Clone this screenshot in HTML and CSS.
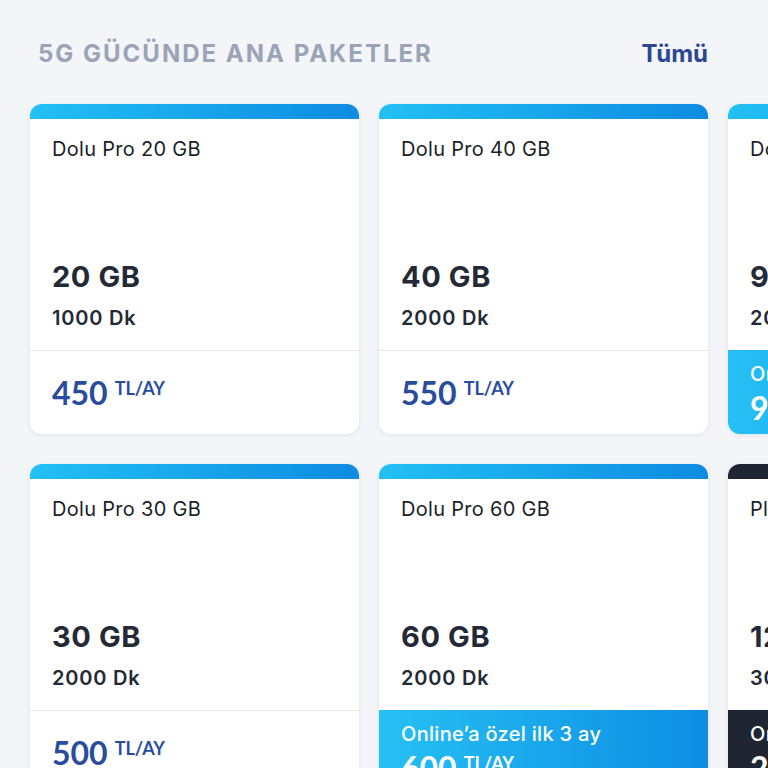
FILE: index.html
```html
<!DOCTYPE html>
<html lang="tr">
<head>
<meta charset="utf-8">
<title>5G Gücünde Ana Paketler</title>
<link rel="stylesheet" href="styles.css">
</head>
<body>
<div class="page">
  <header class="head">
    <h2 class="head-title">5G GÜCÜNDE ANA PAKETLER</h2>
    <a class="head-link" href="#">Tümü</a>
  </header>
  <div class="rows">
    <div class="row">
      <div class="card">
        <div class="bar"></div>
        <div class="body">
          <div class="name">Dolu Pro 20 GB</div>
          <div class="data">20 GB</div>
          <div class="min">1000 Dk</div>
        </div>
        <div class="foot">
          <span class="amount">450</span><span class="unit">TL/AY</span>
        </div>
      </div>
      <div class="card">
        <div class="bar"></div>
        <div class="body">
          <div class="name">Dolu Pro 40 GB</div>
          <div class="data">40 GB</div>
          <div class="min">2000 Dk</div>
        </div>
        <div class="foot">
          <span class="amount">550</span><span class="unit">TL/AY</span>
        </div>
      </div>
      <div class="card">
        <div class="bar"></div>
        <div class="body">
          <div class="name">Dolu Pro 90 GB</div>
          <div class="data">90 GB</div>
          <div class="min">2000 Dk</div>
        </div>
        <div class="foot promo">
          <div class="promo-text">Online’a özel ilk 3 ay</div>
          <div class="promo-price"><span class="amount">900</span><span class="unit">TL/AY</span></div>
        </div>
      </div>
    </div>
    <div class="row">
      <div class="card">
        <div class="bar"></div>
        <div class="body">
          <div class="name">Dolu Pro 30 GB</div>
          <div class="data">30 GB</div>
          <div class="min">2000 Dk</div>
        </div>
        <div class="foot">
          <span class="amount">500</span><span class="unit">TL/AY</span>
        </div>
      </div>
      <div class="card">
        <div class="bar"></div>
        <div class="body">
          <div class="name">Dolu Pro 60 GB</div>
          <div class="data">60 GB</div>
          <div class="min">2000 Dk</div>
        </div>
        <div class="foot promo">
          <div class="promo-text">Online’a özel ilk 3 ay</div>
          <div class="promo-price"><span class="amount">600</span><span class="unit">TL/AY</span></div>
        </div>
      </div>
      <div class="card dark">
        <div class="bar"></div>
        <div class="body">
          <div class="name">Platinum 120 GB</div>
          <div class="data">120 GB</div>
          <div class="min">3000 Dk</div>
        </div>
        <div class="foot promo">
          <div class="promo-text">Online’a özel ilk 3 ay</div>
          <div class="promo-price"><span class="amount">200</span><span class="unit">TL/AY</span></div>
        </div>
      </div>
    </div>
  </div>
</div>
</body>
</html>
```
FILE: styles.css
```css
html, body {
  margin: 0;
  padding: 0;
}
body {
  background: #f3f5f8;
  font-family: Inter, Lato, "Noto Sans", sans-serif;
  overflow: hidden;
  width: 768px;
  height: 768px;
}
.page {
  padding: 40px 0 0 30px;
}
.head {
  width: 678px;
  box-sizing: border-box;
  padding-left: 8px;
  display: flex;
  justify-content: space-between;
  align-items: center;
  height: 28px;
  margin-bottom: 36px;
}
.head-title {
  margin: 0;
  font-size: 24px;
  line-height: 28px;
  font-weight: 700;
  letter-spacing: 2px;
  color: #9ba3b7;
}
.head-link {
  font-size: 24px;
  line-height: 28px;
  font-weight: 700;
  color: #2a4794;
  text-decoration: none;
}
.rows {
  display: flex;
  flex-direction: column;
  gap: 30px;
}
.row {
  display: flex;
  gap: 20px;
}
.card {
  flex: 0 0 329px;
  height: 330px;
  background: #ffffff;
  border-radius: 12px;
  box-shadow: 0 1px 5px rgba(30, 40, 70, 0.09);
  overflow: hidden;
  display: flex;
  flex-direction: column;
}
.bar {
  height: 15px;
  flex: 0 0 15px;
  background: linear-gradient(90deg, #22c0f4, #0e8be2);
}
.card.dark .bar {
  background: #1f2531;
}
.body {
  height: 232px;
  box-sizing: border-box;
  padding: 18px 22px 20px;
  display: flex;
  flex-direction: column;
  border-bottom: 1px solid #e5e7eb;
}
.name {
  font-size: 20px;
  line-height: 24px;
  letter-spacing: 0.3px;
  color: #1b1f27;
}
.data {
  margin-top: auto;
  font-size: 29px;
  line-height: 34px;
  font-weight: 700;
  letter-spacing: 0.6px;
  color: #232a36;
}
.min {
  margin-top: 12px;
  font-size: 20px;
  line-height: 24px;
  font-weight: 600;
  letter-spacing: 0.8px;
  color: #232a36;
}
.foot {
  flex: 1;
  padding: 23px 22px 0;
  display: flex;
  align-items: flex-start;
}
.amount {
  font-family: Lato, Inter, sans-serif;
  font-size: 32px;
  line-height: 38px;
  font-weight: 700;
  color: #2a4c9d;
}
.unit {
  font-family: Lato, Inter, sans-serif;
  margin-left: 7px;
  margin-top: 3px;
  font-size: 18px;
  line-height: 22px;
  font-weight: 700;
  color: #2a4c9d;
}
.foot.promo {
  flex-direction: column;
  padding-top: 11px;
  margin-top: -1px;
  background: linear-gradient(90deg, #26c0f4, #0d8de3);
}
.card.dark .foot.promo {
  background: #1f2531;
}
.promo-text {
  font-size: 20px;
  line-height: 26px;
  font-weight: 500;
  letter-spacing: 0.3px;
  color: #ffffff;
}
.promo-price {
  display: flex;
  align-items: flex-start;
  margin-top: 2px;
}
.promo .amount,
.promo .unit {
  color: #ffffff;
}
```
